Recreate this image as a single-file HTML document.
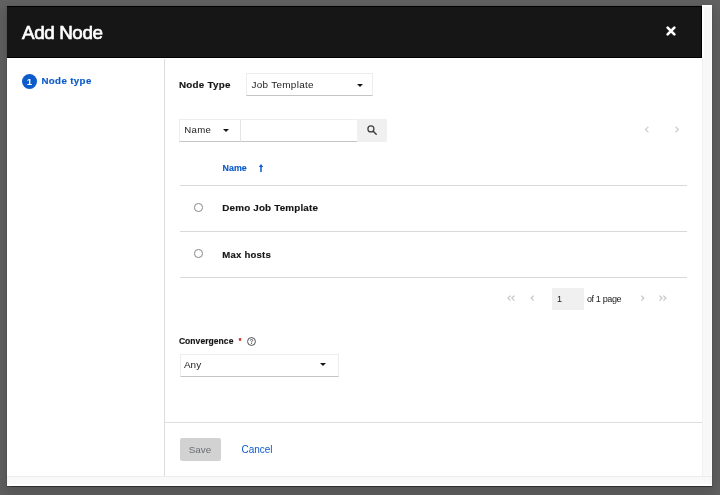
<!DOCTYPE html>
<html lang="en">
<head>
<meta charset="utf-8">
<title>Add Node</title>
<style>
*{box-sizing:border-box;margin:0;padding:0}
html,body{width:720px;height:495px;overflow:hidden}
body{background:#636363;font-family:"Liberation Sans",sans-serif;color:#151515;position:relative;font-size:10px}
.abs{position:absolute}
.t{position:absolute;white-space:nowrap;line-height:1;font-weight:400}
#modal{position:absolute;left:7px;top:5.5px;width:705px;height:480.2px;background:linear-gradient(#000 0,#000 1px,#fff 1px);box-shadow:0 0 1.5px .3px rgba(0,0,0,.5),0 .8px 1px rgba(0,0,0,.45),0 6px 14px 5px rgba(0,0,0,.15)}
#in{position:absolute;left:0;top:-.5px;width:705px;height:480px;will-change:transform}
#header{position:absolute;left:0;top:.5px;width:694.6px;height:52.3px;background:#161616;border-top:1px solid #000;border-bottom:1px solid #000;border-right:1px solid #000}
#title{-webkit-text-stroke:.65px #fff}
#row1,#row2,#lblnt,#lblcv,#thnm,#navt{-webkit-text-stroke:.15px currentColor}
#vscroll{position:absolute;left:695px;top:0;width:10px;height:480px;background:#fff}
#vscroll:before{content:"";position:absolute;left:.3px;top:2px;right:1.5px;bottom:0;background:#f8f8f8;border-left:.7px solid #f0f0f0}
#vscroll:after{content:"";position:absolute;left:0;top:0;width:2px;height:53.5px;background:#fff}
#hscroll{position:absolute;left:0;top:471px;width:705px;height:9px;background:#f9f9f9;border-top:1px solid #ececec;border-bottom:1.5px solid #fff}
#corner{position:absolute;left:695.5px;top:471.5px;width:8px;height:7px;background:#f8f8f8}
#navdiv{position:absolute;left:156.5px;top:53.5px;width:1px;height:418px;background:#dcdcdc}
#footline{position:absolute;left:157px;top:416.5px;width:538px;height:1px;background:#dedede}
.hr{position:absolute;left:172.5px;width:507.5px;height:1px;background:#d9d9d9}
.sel{position:absolute;background:#fff;border:1px solid #ededed;border-bottom:1.9px solid #c2c4c6}
.caret{position:absolute;width:0;height:0;border-left:3.4px solid transparent;border-right:3.4px solid transparent;border-top:3.6px solid #151515;margin-left:-.2px}
.radio{position:absolute;width:8.6px;height:8.6px;border:.9px solid #858585;border-radius:50%;background:#fff}
svg{position:absolute;overflow:visible}
#title{left:15.07px;top:18.55px;font-size:18.84px;letter-spacing:-0.412px;color:#fff;font-weight:400}
#navt{left:34.42px;top:70.98px;font-size:9.71px;letter-spacing:0.375px;color:#0c5bca;font-weight:700}
#lblnt{left:171.91px;top:74.65px;font-size:9.86px;letter-spacing:0.244px;color:#151515;font-weight:700}
#seljt{left:244.40px;top:74.89px;font-size:9.93px;letter-spacing:0.304px;color:#1c1c1c;font-weight:400}
#selnm{left:177.32px;top:120.19px;font-size:9.64px;letter-spacing:0.299px;color:#1c1c1c;font-weight:400}
#thnm{left:215.57px;top:158.82px;font-size:8.84px;letter-spacing:0.038px;color:#0c5bca;font-weight:700}
#row1{left:215.31px;top:198.35px;font-size:9.86px;letter-spacing:0.175px;color:#151515;font-weight:700}
#row2{left:215.33px;top:244.60px;font-size:9.57px;letter-spacing:0.204px;color:#151515;font-weight:700}
#pg1{left:550.06px;top:289.58px;font-size:9.06px;letter-spacing:0.000px;color:#1c1c1c;font-weight:400}
#pgof{left:579.96px;top:289.58px;font-size:9.06px;letter-spacing:-0.384px;color:#1c1c1c;font-weight:400}
#lblcv{left:171.89px;top:332.46px;font-size:8.55px;letter-spacing:0.036px;color:#151515;font-weight:700}
#selany{left:176.90px;top:354.69px;font-size:9.93px;letter-spacing:0.074px;color:#1c1c1c;font-weight:400}
#save{left:181.74px;top:439.77px;font-size:9.84px;letter-spacing:0.036px;color:#6a6e73;font-weight:400}
#cancel{left:234.48px;top:439.64px;font-size:9.99px;letter-spacing:-0.027px;color:#0c5bca;font-weight:400}

</style>
</head>
<body>
<div id="modal" role="dialog" aria-label="Add Node">
<div id="in">
  <div id="vscroll"></div>
  <div id="header">
    <svg style="left:659px;top:19.2px" width="10" height="10" viewBox="0 0 10 10"><path d="M1.65 1.65 L8.35 8.35 M8.35 1.65 L1.65 8.35" stroke="#fff" stroke-width="2.7" stroke-linecap="round" fill="none"/></svg>
  </div>
  <h1 class="t" id="title">Add Node</h1>

  <nav>
    <div class="abs" style="left:15.2px;top:68.7px;width:15px;height:15px;border-radius:50%;background:#0c5bca"></div>
    <span class="t" style="left:19.8px;top:71.7px;font-size:9.6px;font-weight:700;color:#fff">1</span>
    <span class="t" id="navt">Node type</span>
  </nav>
  <div id="navdiv"></div>

  <main>
    <label class="t" id="lblnt">Node Type</label>
    <div class="sel" style="left:238.5px;top:68.3px;width:127.5px;height:22.9px"></div>
    <span class="t" id="seljt">Job Template</span>
    <div class="caret" style="left:349.8px;top:78.6px"></div>

    <div class="sel" style="left:172.3px;top:114.3px;width:61.5px;height:22.3px;border-right-color:#e4e4e4"></div>
    <span class="t" id="selnm">Name</span>
    <div class="caret" style="left:215.7px;top:123.5px"></div>
    <div class="sel" style="left:233.5px;top:114.3px;width:117px;height:22.3px;border-left:0"></div>
    <div class="abs" style="left:350.2px;top:113.9px;width:30px;height:23px;background:#f0f0f0"></div>
    <svg style="left:360px;top:120.3px" width="10" height="10" viewBox="0 0 10 10"><circle cx="3.9" cy="3.9" r="3" fill="none" stroke="#3c3f42" stroke-width="1.25"/><path d="M6.2 6.2 L9.2 9.2" stroke="#3c3f42" stroke-width="1.5" stroke-linecap="round"/></svg>

    <svg style="left:637px;top:121.1px" width="6" height="7" viewBox="0 0 6 7"><path d="M4.4 0.8 L1.5 3.5 L4.4 6.2" fill="none" stroke="#d0d0d0" stroke-width="1.3"/></svg>
    <svg style="left:667.2px;top:121.1px" width="6" height="7" viewBox="0 0 6 7"><path d="M1.5 0.8 L4.4 3.5 L1.5 6.2" fill="none" stroke="#d0d0d0" stroke-width="1.3"/></svg>

    <span class="t" id="thnm">Name</span>
    <svg style="left:251.1px;top:159.1px" width="6" height="8.2" viewBox="0 0 6 8.2"><path d="M3 0 L5.2 2.9 L0.8 2.9 Z" fill="#0c5bca"/><rect x="2.25" y="2.6" width="1.5" height="5.5" fill="#0c5bca"/></svg>
    <div class="hr" style="top:180px"></div>

    <div class="radio" style="left:187.3px;top:198.2px"></div>
    <span class="t" id="row1">Demo Job Template</span>
    <div class="hr" style="top:226px"></div>

    <div class="radio" style="left:187.3px;top:244.2px"></div>
    <span class="t" id="row2">Max hosts</span>
    <div class="hr" style="top:272px"></div>

    <svg style="left:500.3px;top:290.2px" width="9" height="7" viewBox="0 0 9 7"><path d="M3.5 0.6 L1 3.1 L3.5 5.6 M7.4 0.6 L4.9 3.1 L7.4 5.6" fill="none" stroke="#c6c6c6" stroke-width="1.3"/></svg>
    <svg style="left:522.7px;top:290.2px" width="5" height="7" viewBox="0 0 5 7"><path d="M3.7 0.6 L1.2 3.1 L3.7 5.6" fill="none" stroke="#c6c6c6" stroke-width="1.3"/></svg>
    <div class="abs" style="left:545.1px;top:282.8px;width:31.9px;height:22.2px;background:#f0f0f0"></div>
    <span class="t" id="pg1">1</span>
    <span class="t" id="pgof">of 1 page</span>
    <svg style="left:632.5px;top:290.2px" width="5" height="7" viewBox="0 0 5 7"><path d="M1.3 0.6 L3.8 3.1 L1.3 5.6" fill="none" stroke="#c6c6c6" stroke-width="1.3"/></svg>
    <svg style="left:650.6px;top:290.2px" width="9" height="7" viewBox="0 0 9 7"><path d="M1.5 0.6 L4 3.1 L1.5 5.6 M5.4 0.6 L7.9 3.1 L5.4 5.6" fill="none" stroke="#c6c6c6" stroke-width="1.3"/></svg>

    <label class="t" id="lblcv">Convergence</label>
        <span class="t" id="req" style="left:231.85px;top:333.3px;font-size:6.5px;font-weight:700;color:#c9190b;-webkit-text-stroke:.25px #c9190b">*</span>
    <svg style="left:239.6px;top:332.1px" width="9" height="9" viewBox="0 0 9 9"><circle cx="4.5" cy="4.5" r="3.95" fill="none" stroke="#4a4e53" stroke-width="1"/><path d="M3.3 3.6 Q3.3 2.4 4.5 2.4 Q5.7 2.4 5.7 3.5 Q5.7 4.3 4.5 4.7 L4.5 5.4" fill="none" stroke="#3c3f42" stroke-width=".8"/><circle cx="4.5" cy="6.6" r=".5" fill="#3c3f42"/></svg>
    <div class="sel" style="left:172.5px;top:349.2px;width:159px;height:23.1px"></div>
    <span class="t" id="selany">Any</span>
    <div class="caret" style="left:313.2px;top:358px"></div>
  </main>

  <footer>
    <div id="footline"></div>
    <div class="abs" style="left:172.6px;top:433px;width:41.2px;height:22.6px;background:#d2d2d2;border-radius:2px"></div>
    <span class="t" id="save">Save</span>
    <a class="t" id="cancel">Cancel</a>
  </footer>
  <div id="hscroll"></div>
  <div id="corner"></div>
</div>
</div>
</body>
</html>
